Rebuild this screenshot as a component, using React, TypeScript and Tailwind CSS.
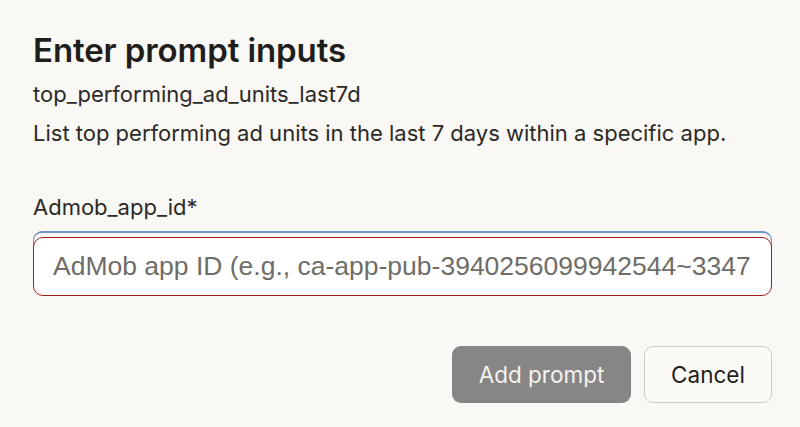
import React from "react";

export default function App() {
  return (
    <div className="w-[800px] h-[427px] bg-[#f9f8f4] overflow-hidden" style={{ fontFamily: "Inter, 'Noto Sans', sans-serif" }}>
      <div className="pl-[33px] pr-[28px] pt-[30px]">
        <h1 className="text-[33px] leading-[40px] font-semibold text-[#1f1e1d] tracking-[-0.1px]">Enter prompt inputs</h1>
        <div className="mt-[10px] text-[22px] leading-[28px] text-[#2b2a27]">top_performing_ad_units_last7d</div>
        <div className="mt-[11px] text-[22px] leading-[28px] text-[#2b2a27]">List top performing ad units in the last 7 days within a specific app.</div>
        <div className="mt-[46px] text-[22px] leading-[28px] text-[#2b2a27]">Admob_app_id*</div>
        <div className="relative mt-[10px] h-[63px] rounded-[9px] border-t-[2px] border-x-[1px] border-b-[2px] border-[#6e94c9]">
          <input
            readOnly
            placeholder="AdMob app ID (e.g., ca-app-pub-3940256099942544~3347"
            className="absolute left-[-1px] right-[-1px] top-[4px] bottom-[-4px] rounded-[10px] border border-[#a61c1c] bg-white pl-[19px] text-[26.5px] text-[#6e6d68] placeholder:text-[#6e6d68] outline-none"
            style={{ fontFamily: "'Liberation Sans', Arial, sans-serif" }}
          />
        </div>
        <div className="mt-[52px] flex justify-end gap-[13px]">
          <button className="h-[57px] w-[179px] rounded-[9px] bg-[#878684] text-[22.5px] text-[#f4f3ef]">Add prompt</button>
          <button className="h-[57px] w-[128px] rounded-[9px] border border-[#cfcdc7] bg-[#fbfaf7] text-[22.5px] text-[#1f1e1d]">Cancel</button>
        </div>
      </div>
    </div>
  );
}
